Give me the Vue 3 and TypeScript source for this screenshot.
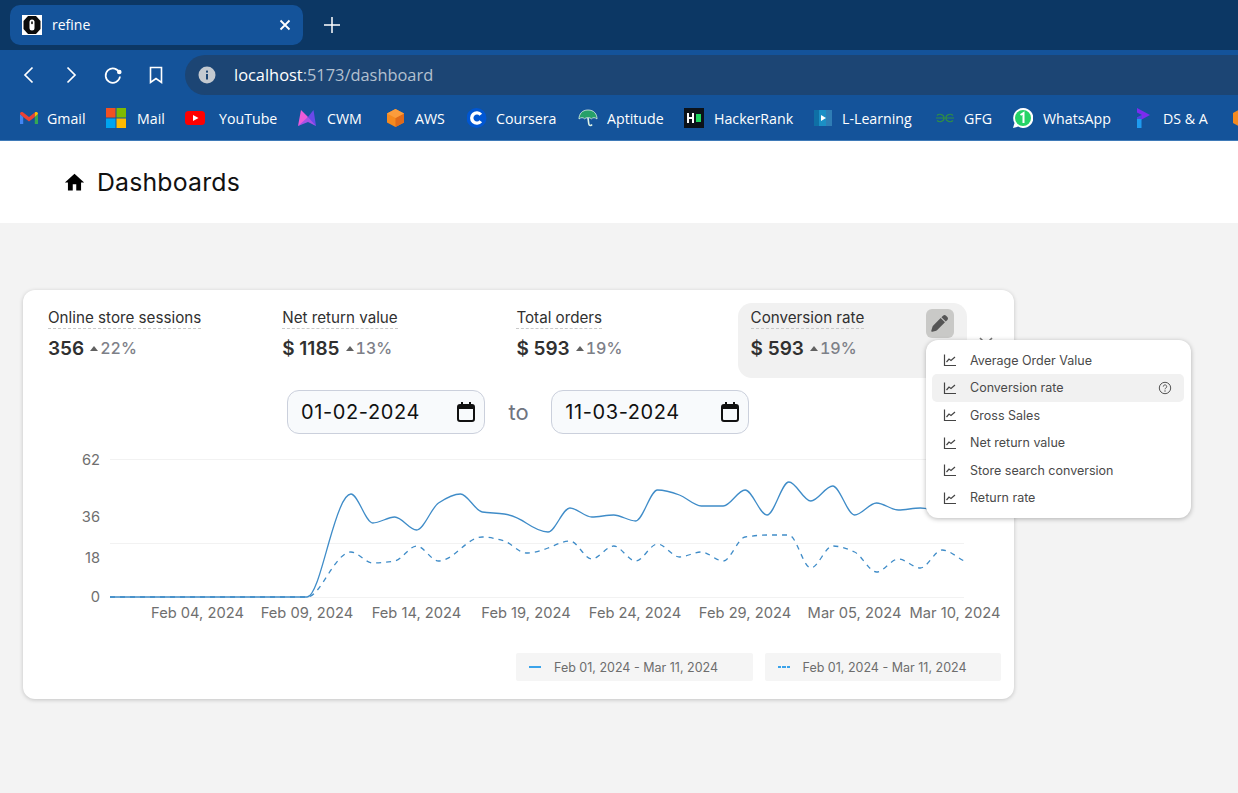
<script setup lang="ts">
// w = distance to the next bookmark, gap = icon to label
const bookmarks = [
  { name: 'Gmail', icon: 'gmail', w: 87, gap: 8 },
  { name: 'Mail', icon: 'ms', w: 79, gap: 11 },
  { name: 'YouTube', icon: 'yt', w: 113, gap: 14 },
  { name: 'CWM', icon: 'cwm', w: 88, gap: 9 },
  { name: 'AWS', icon: 'aws', w: 81, gap: 9 },
  { name: 'Coursera', icon: 'coursera', w: 111, gap: 9 },
  { name: 'Aptitude', icon: 'apt', w: 106, gap: 9 },
  { name: 'HackerRank', icon: 'hr', w: 130, gap: 10 },
  { name: 'L-Learning', icon: 'll', w: 121, gap: 8 },
  { name: 'GFG', icon: 'gfg', w: 78, gap: 9 },
  { name: 'WhatsApp', icon: 'wa', w: 121, gap: 10 },
  { name: 'DS & A', icon: 'ds', w: 98, gap: 9 },
]

const tiles = [
  { title: 'Online store sessions', value: '356', pct: '22%' },
  { title: 'Net return value', value: '$ 1185', pct: '13%' },
  { title: 'Total orders', value: '$ 593', pct: '19%' },
  { title: 'Conversion rate', value: '$ 593', pct: '19%', active: true },
]

const menu = ['Average Order Value', 'Conversion rate', 'Gross Sales', 'Net return value', 'Store search conversion', 'Return rate']

// chart coords: x 87 at first point, y measured from top of the svg
const left = 87
const step = 21.9
const top0 = 450
const solid = [597, 597, 597, 597, 597, 597, 597, 597, 597, 597, 542, 494, 523, 517, 530, 503, 494, 512, 514, 523, 532, 508, 517, 515, 521, 490, 495, 506, 506, 490, 515, 482, 501, 486, 515, 503, 510, 508, 511, 509]
const dashed = [597, 597, 597, 597, 597, 597, 597, 597, 597, 597, 573, 552, 563, 561, 546, 561, 549, 537, 541, 553, 548, 541, 559, 546, 561, 544, 557, 552, 561, 537, 535, 535, 568, 546, 552, 572, 559, 568, 550, 561]

function monotone(vals: number[]) {
  const pts = vals.map((v, i) => [left + i * step, v - top0])
  const slopes: number[] = []
  for (let i = 0; i < pts.length - 1; i++) slopes.push((pts[i + 1][1] - pts[i][1]) / step)
  const t = pts.map((_, i) => {
    if (i === 0) return slopes[0]
    if (i === pts.length - 1) return slopes[i - 1]
    const a = slopes[i - 1]
    const b = slopes[i]
    if (a * b <= 0) return 0
    return Math.sign(a) * Math.min(Math.abs(a), Math.abs(b), 0.5 * Math.abs(a + b)) * 1.6
  })
  let d = `M${pts[0][0]} ${pts[0][1]}`
  for (let i = 0; i < pts.length - 1; i++) {
    const h = step / 3
    d += ` C${(pts[i][0] + h).toFixed(1)} ${(pts[i][1] + t[i] * h).toFixed(1)} ${(pts[i + 1][0] - h).toFixed(1)} ${(pts[i + 1][1] - t[i + 1] * h).toFixed(1)} ${pts[i + 1][0].toFixed(1)} ${pts[i + 1][1]}`
  }
  return d
}

const solidPath = monotone(solid)
const dashedPath = monotone(dashed)

const xLabels = [
  { t: 'Feb 04, 2024', x: 174.5 },
  { t: 'Feb 09, 2024', x: 284 },
  { t: 'Feb 14, 2024', x: 393.5 },
  { t: 'Feb 19, 2024', x: 503 },
  { t: 'Feb 24, 2024', x: 612 },
  { t: 'Feb 29, 2024', x: 722 },
  { t: 'Mar 05, 2024', x: 831.5 },
  { t: 'Mar 10, 2024', x: 932 },
]
const yLabels = [
  { t: '62', y: 10 },
  { t: '36', y: 67 },
  { t: '18', y: 108 },
  { t: '0', y: 147 },
]
</script>

<template>
  <div class="browser">
    <div class="tabstrip">
      <div class="tab">
        <svg class="favicon" width="20" height="20" viewBox="0 0 20 20">
          <rect width="20" height="20" fill="#fff" />
          <path d="M6 1h8L18.500 6v8L14 19H6L1.500 14V6z" fill="#0b0b0b" />
          <rect x="7.500" y="4.500" width="5" height="11" rx="2.500" fill="#fff" />
          <rect x="9.200" y="6.200" width="1.600" height="3" rx=".8" fill="#0b0b0b" />
        </svg>
        <span class="tab-title">refine</span>
        <svg class="tab-x" width="12" height="12" viewBox="0 0 12 12"><path d="M1.500 1.500l9 9M10.500 1.500l-9 9" stroke="#fff" stroke-width="1.800" /></svg>
      </div>
      <svg class="plus" width="16" height="16" viewBox="0 0 16 16"><path d="M8 0v16M0 8h16" stroke="#fff" stroke-width="1.500" /></svg>
    </div>

    <div class="toolbar">
      <svg class="nav" width="20" height="20" viewBox="0 0 20 20"><path d="M13.500 2.500L6 10l7.500 7.500" fill="none" stroke="#fff" stroke-width="1.700" /></svg>
      <svg class="nav" width="20" height="20" viewBox="0 0 20 20"><path d="M6.500 2.500L14 10l-7.500 7.500" fill="none" stroke="#fff" stroke-width="1.700" /></svg>
      <svg class="nav" width="20" height="20" viewBox="0 0 20 20">
        <path d="M16.600 8A7.200 7.200 0 1 0 17 11.500" fill="none" stroke="#fff" stroke-width="1.700" />
        <circle cx="16.300" cy="7" r="2.300" fill="#fff" />
      </svg>
      <svg class="nav bookmark" width="20" height="20" viewBox="0 0 20 20"><path d="M4.500 2.500h11v15L10 13.600l-5.500 3.900z" fill="none" stroke="#fff" stroke-width="1.600" /></svg>
      <div class="urlbar">
        <svg width="18" height="18" viewBox="0 0 18 18">
          <circle cx="9" cy="9" r="8.500" fill="#c3c9d0" />
          <rect x="8" y="8" width="2" height="5.500" fill="#1c4574" />
          <rect x="8" y="4.600" width="2" height="2" fill="#1c4574" />
        </svg>
        <span class="url"><b>localhost</b>:5173/dashboard</span>
      </div>
    </div>

    <div class="bookmarks">
      <div v-for="b in bookmarks" :key="b.name" class="bm" :style="{ width: b.w + 'px', gap: b.gap + 'px' }">
        <svg width="20" height="20" viewBox="0 0 20 20">
          <template v-if="b.icon === 'gmail'">
            <path d="M1 6v10h3.200V9z" fill="#4285f4" />
            <path d="M15.800 9v7H19V6z" fill="#34a853" />
            <path d="M1 6C1 4 3 3.500 4.200 4.500L10 9l5.800-4.500L15.800 9 10 13.500 4.200 9 1 6z" fill="#ea4335" />
            <path d="M15.800 4.500C17 3.500 19 4 19 6L15.800 9z" fill="#fbbc04" />
          </template>
          <template v-else-if="b.icon === 'ms'">
            <rect x="0" y="0" width="9.500" height="9.500" fill="#f25022" />
            <rect x="10.500" y="0" width="9.500" height="9.500" fill="#7fba00" />
            <rect x="0" y="10.500" width="9.500" height="9.500" fill="#00a4ef" />
            <rect x="10.500" y="10.500" width="9.500" height="9.500" fill="#ffb900" />
          </template>
          <template v-else-if="b.icon === 'yt'">
            <rect x="0" y="3" width="20" height="14" rx="3.500" fill="#f00" />
            <path d="M8 7l5.500 3L8 13z" fill="#fff" />
          </template>
          <template v-else-if="b.icon === 'cwm'">
            <path d="M0 18L3 2l7 7-3 5z" fill="#ee5bd8" />
            <path d="M18 18L15.500 2 10 9l2 5z" fill="#6a49e8" />
            <path d="M0 18l10-9 8 9-8-4z" fill="#a652e6" />
          </template>
          <template v-else-if="b.icon === 'aws'">
            <path d="M9.500 1l8.500 4.500v9L9.500 19 1 14.500v-9z" fill="#f58a1f" />
            <path d="M9.500 10L18 5.500v9L9.500 19z" fill="#e06a1b" />
            <path d="M9.500 1L18 5.500 9.500 10 1 5.500z" fill="#fb9c3c" />
          </template>
          <template v-else-if="b.icon === 'coursera'">
            <circle cx="9.500" cy="10" r="10" fill="#0056d2" />
            <path d="M13.800 6.800a5.100 5.100 0 1 0 0 6.400" fill="none" stroke="#fff" stroke-width="3.400" />
          </template>
          <template v-else-if="b.icon === 'apt'">
            <path d="M10 2C4 2 1 6 1 11c2-1.800 4-1.800 5.500-.2C8 9.200 12 9.200 13.500 10.800 15 9.200 17 9.200 19 11c0-5-3-9-9-9z" fill="#27a069" stroke="#dff3e6" stroke-width=".8" />
            <path d="M10 10l.8 6c.2 2 2.400 2 3.200.5" fill="none" stroke="#dff3e6" stroke-width="1.600" />
          </template>
          <template v-else-if="b.icon === 'hr'">
            <rect width="20" height="20" fill="#0c1219" />
            <path d="M4 5v10M9 5v10M4 10h5" stroke="#fff" stroke-width="2" fill="none" />
            <rect x="12" y="6" width="5" height="8" fill="#1ed760" />
          </template>
          <template v-else-if="b.icon === 'll'">
            <rect x="0" y="2" width="18" height="16" fill="#1b8fc5" />
            <rect x="0" y="2" width="5" height="16" fill="#0f6fa5" />
            <rect x="12" y="2" width="6" height="16" fill="#2f7db5" />
            <path d="M7 7l5 3-5 3z" fill="#fff" />
          </template>
          <template v-else-if="b.icon === 'gfg'">
            <path d="M1 10h18M2 7.500a4 3.500 0 0 1 7 2.500 4 3.500 0 0 1-7 2.500M18 7.500a4 3.500 0 0 0-7 2.500 4 3.500 0 0 0 7 2.500" fill="none" stroke="#2f8d46" stroke-width="1.200" />
          </template>
          <template v-else-if="b.icon === 'wa'">
            <path d="M10 0a10 10 0 0 0-8.500 15L0 20l5.200-1.400A10 10 0 1 0 10 0z" fill="#fff" />
            <circle cx="10" cy="10" r="8" fill="#25d366" />
            <path d="M7.500 7l3-2v10" fill="none" stroke="#fff" stroke-width="2" />
          </template>
          <template v-else-if="b.icon === 'ds'">
            <path d="M3 0l13 7-13 7v-4.500L8 7 3 4.500z" fill="#7c2bf0" />
            <path d="M3 9.500L8 7l0 3-5 4z" fill="#4f46e5" />
            <rect x="3" y="11" width="4.500" height="9" fill="#1e9bf0" />
          </template>
        </svg>
        <span>{{ b.name }}</span>
      </div>
      <svg class="bm-more" width="20" height="20" viewBox="0 0 20 20"><path d="M10 0l9 5v10l-9 5-9-5V5z" fill="#f58a1f" /></svg>
    </div>

    <div class="page">
      <header class="page-head">
        <svg width="21" height="21" viewBox="0 0 24 24"><path d="M10 21v-7h4v7h5.500v-9H23L12 2 1 12h3.500v9z" fill="#000" /></svg>
        <h1>Dashboards</h1>
      </header>

      <main class="content">
        <section class="card">
          <div class="tiles">
            <div v-for="t in tiles" :key="t.title" class="tile" :class="{ active: t.active }">
              <div class="tile-title">{{ t.title }}</div>
              <div class="tile-value">
                <span class="val">{{ t.value }}</span>
                <i class="caret"></i>
                <span class="pct">{{ t.pct }}</span>
              </div>
              <button v-if="t.active" class="edit">
                <svg width="17" height="17" viewBox="0 0 512 512"><path d="M362.700 19.300c25-25 65.500-25 90.500 0l39.500 39.500c25 25 25 65.500 0 90.500l-48.400 48.400-130-130zM290.700 91.300l130 130L188.500 453.500c-8 8-17.900 13.900-28.800 17.100L38.700 506.200c-8.400 2.500-17.500.2-23.700-6s-8.500-15.300-6-23.700l35.600-121c3.200-10.900 9.100-20.800 17.100-28.800z" fill="#555" /></svg>
              </button>
            </div>
          </div>

          <div class="dates">
            <div class="date">
              <span>01-02-2024</span>
              <svg width="18" height="20" viewBox="0 0 18 20"><rect x="1" y="3" width="16" height="16" rx="2" fill="none" stroke="#111" stroke-width="2" /><rect x="1" y="3" width="16" height="4" fill="#111" /><path d="M5 0v4M13 0v4" stroke="#111" stroke-width="2" /></svg>
            </div>
            <span class="to">to</span>
            <div class="date">
              <span>11-03-2024</span>
              <svg width="18" height="20" viewBox="0 0 18 20"><rect x="1" y="3" width="16" height="16" rx="2" fill="none" stroke="#111" stroke-width="2" /><rect x="1" y="3" width="16" height="4" fill="#111" /><path d="M5 0v4M13 0v4" stroke="#111" stroke-width="2" /></svg>
            </div>
          </div>

          <svg class="chart" width="991" height="180" viewBox="0 0 991 180">
            <line x1="87" x2="941" y1="9.500" y2="9.500" class="grid" />
            <line x1="87" x2="941" y1="93.500" y2="93.500" class="grid" />
            <line x1="87" x2="941" y1="147.500" y2="147.500" class="grid" />
            <text v-for="l in yLabels" :key="l.t" x="77" :y="l.y + 5" text-anchor="end" class="axis">{{ l.t }}</text>
            <text v-for="l in xLabels" :key="l.t" :x="l.x" y="168" text-anchor="middle" class="axis">{{ l.t }}</text>
            <path :d="solidPath" class="line" />
            <path :d="dashedPath" class="line" stroke-dasharray="5 5" />
          </svg>

          <div class="legend">
            <div class="legend-item"><span class="swatch"></span>Feb 01, 2024 - Mar 11, 2024</div>
            <div class="legend-item"><span class="swatch dash"></span>Feb 01, 2024 - Mar 11, 2024</div>
          </div>

          <svg class="close" width="14" height="14" viewBox="0 0 14 14"><path d="M1 1l12 12M13 1L1 13" stroke="#777" stroke-width="1.600" /></svg>

          <div class="popup">
            <div v-for="m in menu" :key="m" class="menu-item" :class="{ on: m === 'Conversion rate' }">
              <svg width="14" height="14" viewBox="0 0 14 14"><path d="M1.500 1.500v11h11.500" fill="none" stroke="#444" stroke-width="1.200" /><path d="M3.500 9L6 6l2 1.500L12 4" fill="none" stroke="#444" stroke-width="1.200" /></svg>
              <span>{{ m }}</span>
              <svg v-if="m === 'Conversion rate'" class="help" width="14" height="14" viewBox="0 0 14 14">
                <circle cx="7" cy="7" r="5.700" fill="none" stroke="#555" stroke-width="1" />
                <path d="M5.300 5.600a1.700 1.700 0 1 1 2.600 1.400c-.6.400-.9.700-.9 1.300" fill="none" stroke="#555" stroke-width="1" />
                <circle cx="7" cy="10" r=".7" fill="#555" />
              </svg>
            </div>
          </div>
        </section>
      </main>
    </div>
  </div>
</template>

<style>
html, body { margin: 0; background: #f3f3f3; }
</style>

<style scoped>
.browser {
  width: 1238px;
  height: 793px;
  overflow: hidden;
  display: flex;
  flex-direction: column;
  font-family: "Inter", sans-serif;
}
.tabstrip {
  height: 50px;
  flex: none;
  box-sizing: border-box;
  background: #0c3764;
  padding: 5px 0 5px 10px;
  display: flex;
  align-items: center;
  gap: 21px;
}
.tab {
  width: 293px;
  height: 40px;
  box-sizing: border-box;
  background: #14539a;
  border-radius: 10px;
  display: flex;
  align-items: center;
  padding: 0 12px;
  gap: 10px;
  color: #fff;
  font: 14px "Open Sans", sans-serif;
}
.tab-title { flex: 1; margin-top: -1px; }
.toolbar {
  height: 50px;
  flex: none;
  box-sizing: border-box;
  background: #14539a;
  padding: 5px 0 5px 19px;
  display: flex;
  align-items: center;
  gap: 22px;
}
.nav { flex: none; }
.bookmark { margin-left: 1px; margin-right: -3px; }
.urlbar {
  flex: 1;
  height: 40px;
  background: #1c4574;
  border-radius: 20px 0 0 20px;
  display: flex;
  align-items: center;
  padding-left: 13px;
  gap: 18px;
}
.url {
  font: 16.400px "Open Sans", sans-serif;
  color: #b3c0cf;
  margin-top: -1px;
}
.url b { font-weight: 400; color: #fff; }
.bookmarks {
  height: 41px;
  flex: none;
  box-sizing: border-box;
  background: #14539a;
  border-bottom: 1px solid #3f7ab8;
  display: flex;
  align-items: center;
  padding: 0 0 4px 19px;
  color: #fff;
  font: 14.200px "Open Sans", sans-serif;
  overflow: hidden;
}
.bm {
  flex: none;
  display: flex;
  align-items: center;
  white-space: nowrap;
}
.bm svg { flex: none; }
.bm-more { flex: none; }
.page {
  flex: 1;
  display: flex;
  flex-direction: column;
  background: #f3f3f3;
}
.page-head {
  height: 82px;
  flex: none;
  background: #fff;
  display: flex;
  align-items: center;
  padding-left: 64px;
  gap: 12px;
}
.page-head h1 {
  margin: 0;
  font-size: 24.800px;
  font-weight: 400;
  color: #111;
  letter-spacing: 0.2px;
}
.content { padding: 67px 0 0 23px; }
.card {
  position: relative;
  width: 991px;
  height: 409px;
  background: #fff;
  border-radius: 12px;
  box-shadow: 0 1px 4px rgba(0, 0, 0, 0.2);
}
.tiles {
  display: grid;
  grid-template-columns: repeat(4, 229px);
  column-gap: 5.200px;
  padding: 13px 0 0 12px;
}
.tile {
  position: relative;
  height: 75px;
  border-radius: 14px;
  padding: 0 13px;
  color: #303030;
}
.tile.active { background: #f1f1f1; }
.tile-title {
  display: inline-block;
  font-size: 15.200px;
  line-height: 20px;
  padding-top: 5px;
  border-bottom: 1px dashed #c9c9c9;
  color: #303030;
}
.tile-value {
  display: flex;
  align-items: center;
  margin-top: 7px;
  height: 24px;
}
.val { font-size: 19px; font-weight: 600; color: #303030; }
.caret {
  width: 0;
  height: 0;
  border-left: 4.500px solid transparent;
  border-right: 4.500px solid transparent;
  border-bottom: 5px solid #616161;
  margin: 0 2px 0 6px;
}
.pct { font-size: 16px; font-weight: 500; color: #7d8088; font-variant-numeric: tabular-nums; }
.edit {
  position: absolute;
  top: 6px;
  right: 13px;
  width: 28px;
  height: 29px;
  border: 0;
  padding: 0;
  border-radius: 6px;
  background: #c9c9c7;
  display: flex;
  align-items: center;
  justify-content: center;
}
.dates {
  display: flex;
  align-items: center;
  margin-top: 12px;
  padding-left: 264px;
  gap: 22.500px;
}
.date {
  width: 198px;
  height: 44px;
  box-sizing: border-box;
  background: #f8fafc;
  border: 1px solid #cbd0dc;
  border-radius: 12px;
  padding: 0 9px 0 13px;
  display: flex;
  align-items: center;
  justify-content: space-between;
  font-size: 20px;
  letter-spacing: 0.6px;
  color: #111;
}
.to { font-size: 22px; color: #70757f; margin-left: 1px; }
.chart { display: block; margin-top: 16px; }
.grid { stroke: #f2f2f2; stroke-width: 1; }
.axis { font-size: 14.700px; fill: #6f6f6f; font-family: "Inter", sans-serif; }
.line { fill: none; stroke: #3f8cc8; stroke-width: 1.300; }
.legend {
  display: flex;
  justify-content: flex-end;
  gap: 12px;
  margin-top: 23px;
  padding-right: 13px;
}
.legend-item {
  width: 236.500px;
  height: 28px;
  box-sizing: border-box;
  background: #f5f5f5;
  border-radius: 2px;
  font-size: 12.500px;
  color: #6d6d6d;
  display: flex;
  align-items: center;
  padding-left: 13px;
  gap: 13px;
}
.swatch {
  width: 12px;
  height: 2px;
  background: #3aa3ea;
}
.swatch.dash {
  background: repeating-linear-gradient(90deg, #3aa3ea 0 3px, transparent 3px 4.500px);
}
.close { position: absolute; left: 956px; top: 47px; }
.popup {
  position: absolute;
  left: 903px;
  top: 50px;
  width: 265px;
  height: 178px;
  box-sizing: border-box;
  background: #fff;
  border-radius: 12px;
  box-shadow: 0 1px 5px rgba(0, 0, 0, 0.28);
  padding: 6.700px 7px 0 6px;
  display: flex;
  flex-direction: column;
}
.menu-item {
  height: 27.500px;
  flex: none;
  display: flex;
  align-items: center;
  gap: 13px;
  padding: 0 12px 0 11px;
  font-size: 12.500px;
  color: #4a4a4a;
  border-radius: 5px;
}
.menu-item span { flex: 1; }
.menu-item.on { background: #f1f1f1; }
</style>
